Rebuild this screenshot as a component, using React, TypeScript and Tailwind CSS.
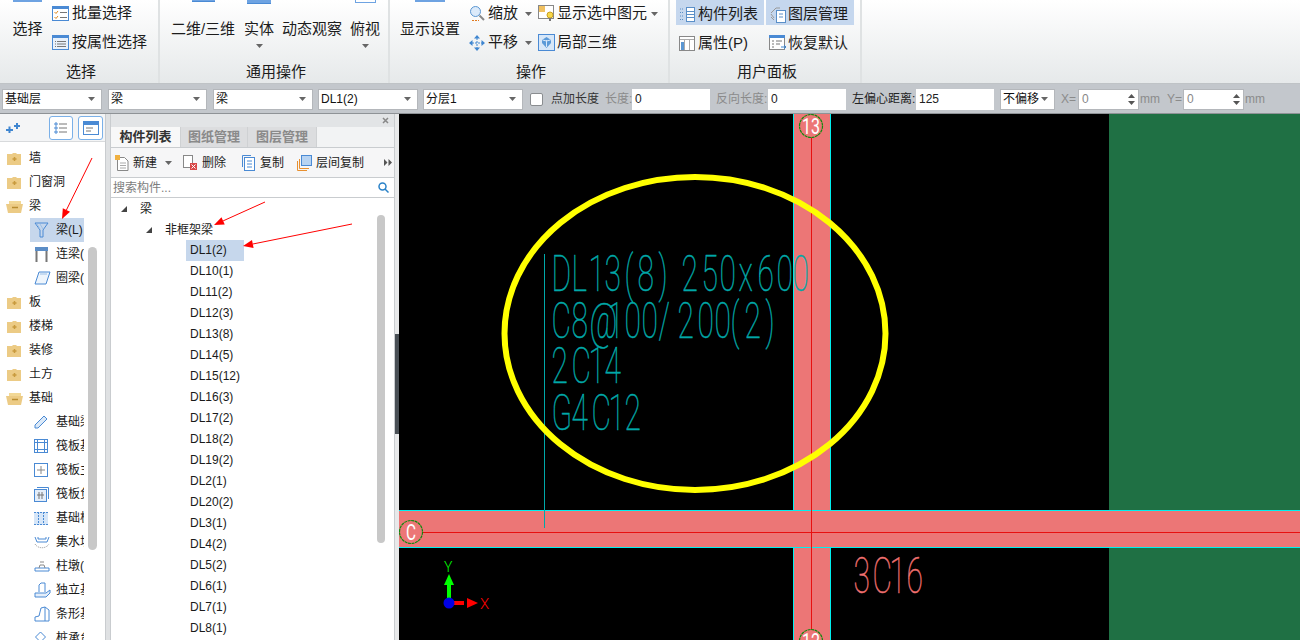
import React from "react";

const B = "#4a8ad4";
const Caret = ({ cls = "" }: { cls?: string }) => (
  <svg width="7" height="4" viewBox="0 0 7 4" className={cls}><path d="M0 0h7L3.5 4z" fill="#666" /></svg>
);

/* ---------- ribbon icons ---------- */
const IcoBatch = () => (
  <svg width="17" height="15" viewBox="0 0 17 15"><rect x=".5" y=".5" width="16" height="14" fill="#fff" stroke={B} /><rect x="0" y="0" width="17" height="3" fill={B} /><path d="M2.5 6l1.5 1.5L6 5M2.5 11l1.5 1.5L6 10" stroke="#e08a20" fill="none" /><path d="M8 6.5h7M8 11.5h7" stroke="#777" /></svg>
);
const IcoAttr = () => (
  <svg width="17" height="15" viewBox="0 0 17 15"><rect x=".5" y=".5" width="16" height="14" fill="#e8f1fb" stroke={B} /><rect x="0" y="0" width="17" height="3" fill={B} /><path d="M5 6.5h9M5 9h9M5 11.5h9M3 6.5h1M3 9h1M3 11.5h1" stroke="#777" /></svg>
);
const IcoZoom = () => (
  <svg width="16" height="17" viewBox="0 0 16 17"><circle cx="6.5" cy="6.5" r="5" fill="#dbeafa" stroke="#5a96d2" /><path d="M10.5 10.5l4.5 4.5" stroke="#888" strokeWidth="2" /><path d="M3 15.5h7" stroke="#e07a20" strokeDasharray="2 1" /></svg>
);
const IcoPan = () => (
  <svg width="16" height="16" viewBox="0 0 16 16"><path d="M8 0l3 3.5H5zM8 16l-3-3.5h6zM0 8l3.5-3v6zM16 8l-3.5 3V5z" fill="#3f86d0" /><path d="M8 3v10M3 8h10" stroke="#3f86d0" strokeDasharray="2 1" /></svg>
);
const IcoShow = () => (
  <svg width="17" height="17" viewBox="0 0 17 17"><rect x=".5" y=".5" width="15" height="13" fill="#fff" stroke="#888" /><rect x="1" y="1" width="6" height="6" fill="#f0c060" /><circle cx="12" cy="10" r="3" fill="#f7d84a" stroke="#c9a020" /><rect x="11" y="13" width="2" height="3" fill="#777" /></svg>
);
const IcoLocal = () => (
  <svg width="17" height="17" viewBox="0 0 17 17"><rect x=".5" y=".5" width="16" height="16" fill="#d7e7f8" stroke={B} /><path d="M8.5 3l4.5 3v3l-4.5 5L4 9V6z" fill="#5b9ad8" /><path d="M8.5 6v7M4.5 6l4 1 4-1" stroke="#d7e7f8" fill="none" /></svg>
);
const IcoList = () => (
  <svg width="15" height="17" viewBox="0 0 15 17"><rect x="6.5" y="1.5" width="8" height="14" fill="#fff" stroke="#5a8fc8" /><path d="M6.5 5.5h8M6.5 8.500h8M6.500 11.500h8" stroke="#5a8fc8" /><path d="M0 3h4M0 6.500h4M0 10h4M0 13.500h4" stroke="#5a8fc8" strokeDasharray="1 1" /></svg>
);
const IcoLayer = () => (
  <svg width="17" height="17" viewBox="0 0 17 17"><path d="M1 7l5-5h4" stroke="#999" fill="none" /><path d="M1 8l3 4M1 11l3 3" stroke="#999" /><rect x="6.500" y="4.500" width="9" height="12" fill="#fff" stroke="#5a8fc8" /><path d="M9 8h4M9 11h4" stroke="#5a8fc8" /></svg>
);
const IcoProp = () => (
  <svg width="16" height="15" viewBox="0 0 16 15"><rect x=".5" y=".5" width="15" height="14" fill="#fff" stroke="#888" /><path d="M1 3.500h14M5.500 4v10M10.500 4v10" stroke="#aaa" /><rect x="2" y="6" width="3" height="8" fill="#5a96d2" /></svg>
);
const IcoReset = () => (
  <svg width="18" height="16" viewBox="0 0 18 16"><rect x=".5" y=".5" width="15" height="14" fill="#fff" stroke="#888" /><rect x="0" y="0" width="16" height="3" fill={B} /><path d="M3 6h2M7 6h6M3 9h2M7 9h4M3 12h2" stroke="#777" /><path d="M12 12h5M15 10l2 2-2 2" stroke="#3f86d0" fill="none" /></svg>
);

const Big = ({ label, w, caret, sliver }: { label: string; w: string; caret?: boolean; sliver?: React.ReactNode }) => (
  <div className={`flex flex-col items-center h-[60px] ${w}`}>
    <div className="h-[5px] flex justify-center items-start">{sliver}</div>
    <div className="h-[20px] mt-[14px] leading-[20px] whitespace-nowrap">{label}</div>
    {caret && <Caret cls="mt-[5px]" />}
  </div>
);
const Small = ({ icon, label, caret, iconW = "w-[19px]", cls = "", caretCls = "ml-[7px]" }: { icon: React.ReactNode; label: string; caret?: boolean; iconW?: string; cls?: string; caretCls?: string }) => (
  <div className={`flex items-center whitespace-nowrap ${cls}`}>
    <span className={`${iconW} flex shrink-0`}>{icon}</span>
    <span>{label}</span>
    {caret && <Caret cls={caretCls} />}
  </div>
);
const Group = ({ w, label, children }: { w: string; label: string; children: React.ReactNode }) => (
  <div className={`${w} h-full flex flex-col border-r-2 border-[#dfe2e3] shrink-0`}>
    <div className="h-[61px] flex">{children}</div>
    <div className="h-[22px] pl-[4px] text-center leading-[22px]">{label}</div>
  </div>
);
const Blue = ({ w, h }: { w: string; h: string }) => <div className={`${w} ${h} bg-[#6ea3e2] border-b border-[#4a8ad4]`} />;

const Ribbon = () => (
  <div className="h-[84px] flex bg-gradient-to-b from-white to-[#e6e9ea] text-[15px] text-[#1c1c1c] shrink-0 border-b border-[#bfc3c6]">
    <Group w="w-[160px]" label="选择">
      <div className="w-[52px] pl-[12px]"><Big label="选择" w="w-[31px]" sliver={<div className="w-[29px] h-[2px] bg-[#6ea3e2]" />} /></div>
      <div className="flex flex-col">
        <Small cls="h-[26px]" icon={<IcoBatch />} label="批量选择" iconW="w-[20px]" />
        <Small cls="h-[32px]" icon={<IcoAttr />} label="按属性选择" iconW="w-[20px]" />
      </div>
    </Group>
    <Group w="w-[230px]" label="通用操作">
      <div className="flex pl-[10px] gap-[8px]">
        <Big label="二维/三维" w="w-[66px]" sliver={<Blue w="w-[23px]" h="h-[2px]" />} />
        <Big label="实体" w="w-[30px]" caret sliver={<Blue w="w-[24px]" h="h-[4px]" />} />
        <Big label="动态观察" w="w-[60px]" />
        <Big label="俯视" w="w-[30px]" caret sliver={<div className="w-[21px] h-[3px] border-b border-x border-[#6ea3e2]" />} />
      </div>
    </Group>
    <Group w="w-[280px]" label="操作">
      <div className="w-[79px] pl-[10px]"><Big label="显示设置" w="w-[60px]" sliver={<div className="w-[30px] h-[2px] bg-[#6ea3e2]" />} /></div>
      <div className="flex flex-col w-[69px]">
        <Small cls="h-[27px]" icon={<IcoZoom />} label="缩放" caret />
        <Small cls="h-[31px]" icon={<IcoPan />} label="平移" caret />
      </div>
      <div className="flex flex-col">
        <Small cls="h-[27px]" icon={<IcoShow />} label="显示选中图元" caret caretCls="ml-[4px]" />
        <Small cls="h-[31px]" icon={<IcoLocal />} label="局部三维" />
      </div>
    </Group>
    <Group w="w-[192px]" label="用户面板">
      <div className="flex flex-col pl-[6px]">
        <div className="flex gap-[2px] h-[25px]">
          <Small cls="w-[88px] bg-[#c5d7ee] pl-[4px] pt-[3px]" iconW="w-[18px]" icon={<IcoList />} label="构件列表" />
          <Small cls="w-[88px] bg-[#c5d7ee] pl-[4px] pt-[3px]" iconW="w-[18px]" icon={<IcoLayer />} label="图层管理" />
        </div>
        <div className="flex gap-[2px] h-[36px]">
          <Small cls="w-[88px] pl-[3px]" iconW="w-[19px]" icon={<IcoProp />} label="属性(P)" />
          <Small cls="w-[88px] pl-[3px]" iconW="w-[19px]" icon={<IcoReset />} label="恢复默认" />
        </div>
      </div>
    </Group>
  </div>
);

/* ---------- property bar ---------- */
const Combo = ({ w, label, cls = "" }: { w: string; label: string; cls?: string }) => (
  <div className={`${w} h-[21px] bg-white border border-[#b4b7bb] flex items-center justify-between pl-[2px] pr-[6px] text-[12px] text-[#111] shrink-0 ${cls}`}>
    <span>{label}</span><Caret />
  </div>
);
const Field = ({ w, v, cls = "" }: { w: string; v: string; cls?: string }) => (
  <div className={`${w} h-[21px] bg-white pl-[3px] leading-[21px] text-[12px] text-[#222] shrink-0 ${cls}`}>{v}</div>
);
const Spin = ({ w }: { w: string }) => (
  <div className={`${w} h-[21px] bg-white border border-[#b4b7bb] flex items-center justify-between pl-[3px] pr-[3px] text-[12px] text-[#888] shrink-0`}>
    <span>0</span>
    <svg width="7" height="13" viewBox="0 0 7 13"><path d="M0 5l3.500-4L7 5zM0 8l3.500 4L7 8z" fill="#555" /></svg>
  </div>
);
const PropBar = () => (
  <div className="h-[29px] bg-[#c3c7cc] flex items-center pl-[2px] pt-[1px] text-[12px] shrink-0">
    <Combo w="w-[100px]" label="基础层" />
    <Combo w="w-[99px]" label="梁" cls="ml-[6px]" />
    <Combo w="w-[100px]" label="梁" cls="ml-[6px]" />
    <Combo w="w-[100px]" label="DL1(2)" cls="ml-[5px]" />
    <Combo w="w-[100px]" label="分层1" cls="ml-[5px]" />
    <div className="w-[13px] h-[13px] ml-[7px] bg-white border border-[#8a8d90] rounded-[2px] shrink-0" />
    <span className="ml-[8px] w-[54px] text-[#333] whitespace-nowrap">点加长度</span>
    <span className="w-[27px] text-[#8b8b8b] whitespace-nowrap">长度:</span>
    <Field w="w-[78px]" v="0" />
    <span className="ml-[6px] w-[52px] text-[#8b8b8b] whitespace-nowrap">反向长度:</span>
    <Field w="w-[78px]" v="0" />
    <span className="ml-[6px] w-[64px] text-[#222] whitespace-nowrap">左偏心距离:</span>
    <Field w="w-[78px]" v="125" />
    <Combo w="w-[55px]" label="不偏移" cls="ml-[6px]" />
    <span className="ml-[6px] w-[17px] text-[#8b8b8b]">X=</span>
    <Spin w="w-[61px]" />
    <span className="ml-[1px] w-[27px] text-[#8b8b8b]">mm</span>
    <span className="w-[16px] text-[#8b8b8b]">Y=</span>
    <Spin w="w-[61px]" />
    <span className="ml-[1px] text-[#8b8b8b]">mm</span>
  </div>
);

/* ---------- left tree ---------- */
const FolderC = () => (
  <svg width="16" height="13" viewBox="0 0 16 13"><path d="M1 2h5l1-1h3l1 1h4v11H1z" fill="#eccb85" /><path d="M6.500 7h4M8.500 5v4" stroke="#c89a3e" strokeWidth="1.500" /></svg>
);
const FolderO = () => (
  <svg width="18" height="13" viewBox="0 0 18 13"><path d="M3 1h12v3H3z" fill="#f2d896" /><path d="M0 4h17l-2 9H2z" fill="#eccb85" /><path d="M6 7.500h6" stroke="#b98c30" strokeWidth="1.500" /></svg>
);
const i = { fill: "none", stroke: B } as const;
const TIcons: Record<string, React.ReactNode> = {
  liang: <svg width="15" height="16" viewBox="0 0 15 16"><path d="M1 1h13L9 8v7H6V8z" {...i} /><path d="M3 2l3 5M6 2l3 5" stroke="#9cc0e6" /></svg>,
  lian: <svg width="15" height="17" viewBox="0 0 15 17"><rect x="1" y="1" width="13" height="4" fill="#5b8dc6" /><path d="M2.500 5v11M12.500 5v11" stroke="#777" strokeWidth="2" /></svg>,
  quan: <svg width="17" height="14" viewBox="0 0 17 14"><path d="M5 1h11l-4 12H1z" fill="#eef5fc" stroke={B} /><path d="M6 3h7" stroke="#9cc0e6" /></svg>,
  ji: <svg width="14" height="14" viewBox="0 0 14 14"><path d="M1 10L10 1l3 3-9 9H1z" fill="#dbe9f8" stroke={B} /></svg>,
  fa1: <svg width="14" height="14" viewBox="0 0 14 14"><rect x=".5" y=".5" width="13" height="13" {...i} /><rect x="3.500" y="3.500" width="7" height="7" {...i} /><path d="M0 3.500h14M0 10.500h14M3.500 0v14M10.500 0v14" {...i} /></svg>,
  fa2: <svg width="14" height="14" viewBox="0 0 14 14"><rect x=".5" y=".5" width="13" height="13" {...i} /><path d="M7 3v8M3 7h8" stroke="#888" /></svg>,
  fa3: <svg width="15" height="15" viewBox="0 0 15 15"><path d="M3 0.500h11.500V12" {...i} /><rect x=".5" y="2.500" width="12" height="12" fill="#e4eefa" stroke={B} /><path d="M5 5v7M8 5v7M3 8h7" stroke="#777" /></svg>,
  ji2: <svg width="14" height="13" viewBox="0 0 14 13"><rect x="0" y="0" width="14" height="13" fill="#d6e6f8" /><path d="M0 .5h14M0 12.500h14M4.500 0v13M9.500 0v13" stroke={B} strokeDasharray="2 1" /></svg>,
  shui: <svg width="16" height="13" viewBox="0 0 16 13"><path d="M1 1l2 5h10l2-5M4 1v2h8V1" {...i} /><path d="M1 8c3 5 11 5 14 0" stroke="#999" strokeDasharray="1 1" fill="none" /></svg>,
  zhu: <svg width="16" height="11" viewBox="0 0 16 11"><path d="M1 7h14v3H1z" {...i} /><path d="M5 7l1-3h4l1 3M6 1h4" stroke="#888" fill="none" /></svg>,
  du: <svg width="17" height="16" viewBox="0 0 17 16"><path d="M1 11h11l4-3v3l-4 4H1z" fill="#e4eefa" stroke={B} /><path d="M5 10V3l2-2h4v9" fill="#fff" stroke={B} /></svg>,
  tiao: <svg width="16" height="16" viewBox="0 0 16 16"><path d="M1 15v-4l4-1 2-8 4-1 4 3v11z" fill="#fff" stroke={B} /><path d="M11 1v14" stroke={B} /></svg>,
  zhuang: <svg width="13" height="14" viewBox="0 0 13 14"><path d="M6.500 1l5 5-5 5-5-5z" {...i} /><path d="M4 11v3M9 11v3" stroke={B} /></svg>,
};
const leftRows: { t: string; k?: "c" | "o"; icon?: string; sel?: boolean }[] = [
  { t: "墙", k: "c" }, { t: "门窗洞", k: "c" }, { t: "梁", k: "o" },
  { t: "梁(L)", icon: "liang", sel: true }, { t: "连梁(G)", icon: "lian" }, { t: "圈梁(E)", icon: "quan" },
  { t: "板", k: "c" }, { t: "楼梯", k: "c" }, { t: "装修", k: "c" }, { t: "土方", k: "c" }, { t: "基础", k: "o" },
  { t: "基础梁(F)", icon: "ji" }, { t: "筏板基础(M)", icon: "fa1" }, { t: "筏板主筋(R)", icon: "fa2" }, { t: "筏板负筋(X)", icon: "fa3" },
  { t: "基础板带(W)", icon: "ji2" }, { t: "集水坑(K)", icon: "shui" }, { t: "柱墩(Y)", icon: "zhu" }, { t: "独立基础(D)", icon: "du" },
  { t: "条形基础(T)", icon: "tiao" }, { t: "桩承台(V)", icon: "zhuang" },
];
const LeftPanel = () => (
  <div className="w-[106px] h-full bg-white border-r border-[#c9cccf] flex flex-col shrink-0 relative overflow-hidden text-[12px] text-[#1a1a1a]">
    <div className="h-[28px] border-b border-[#d8dadc] bg-[#f4f5f6] flex items-center pl-[6px] shrink-0">
      <svg width="14" height="10" viewBox="0 0 14 10"><path d="M0 7h7M3.500 3.500v7M8 3h6M11 0v6" stroke="#3f86d0" strokeWidth="2" /></svg>
      <div className="ml-[29px] w-[24px] h-[24px] border border-[#7ab0e8] rounded-[3px] bg-white flex items-center justify-center">
        <svg width="14" height="14" viewBox="0 0 14 14"><path d="M1 2h2v2H1zM1 6h2v2H1zM1 10h2v2H1z" {...i} /><path d="M5 3h8M5 7h8M5 11h8" stroke="#777" /></svg>
      </div>
      <div className="ml-[5px] w-[25px] h-[24px] border border-[#7ab0e8] rounded-[3px] bg-white flex items-center justify-center">
        <svg width="16" height="14" viewBox="0 0 16 14"><rect x=".5" y=".5" width="15" height="13" fill="#fff" stroke={B} /><rect x="0" y="0" width="16" height="4" fill={B} /><path d="M3 7h7M3 10h5" stroke="#777" /></svg>
      </div>
    </div>
    <div className="flex flex-col pt-[4px]">
      {leftRows.map((r, n) => (
        <div key={n} className="h-[24px] flex items-center shrink-0">
          {r.k ? (
            <>
              <span className="w-[29px] pl-[6px] flex shrink-0">{r.k === "c" ? <FolderC /> : <FolderO />}</span>
              <span className="whitespace-nowrap">{r.t}</span>
            </>
          ) : (
            <div className={`ml-[30px] w-[54px] h-[24px] flex items-center overflow-hidden ${r.sel ? "bg-[#c6d7ec]" : ""}`}>
              <span className="w-[26px] pl-[4px] flex shrink-0">{TIcons[r.icon!]}</span>
              <span className="whitespace-nowrap">{r.t}</span>
            </div>
          )}
        </div>
      ))}
    </div>
    <div className="absolute left-[88px] top-[133px] w-[9px] h-[303px] rounded-full bg-[#c8c8c8]" />
  </div>
);

/* ---------- component panel ---------- */
const dl = ["DL1(2)", "DL10(1)", "DL11(2)", "DL12(3)", "DL13(8)", "DL14(5)", "DL15(12)", "DL16(3)", "DL17(2)", "DL18(2)", "DL19(2)", "DL2(1)", "DL20(2)", "DL3(1)", "DL4(2)", "DL5(2)", "DL6(1)", "DL7(1)", "DL8(1)"];
const Tri = () => <svg width="6" height="6" viewBox="0 0 6 6"><path d="M6 0v6H0z" fill="#444" /></svg>;
const Tool = ({ icon, label, w, caret }: { icon: React.ReactNode; label: string; w: string; caret?: boolean }) => (
  <div className={`${w} flex items-center whitespace-nowrap shrink-0`}>{icon}<span className="ml-[4px]">{label}</span>{caret && <Caret cls="ml-[8px]" />}</div>
);
const MidPanel = () => (
  <div className="w-[285px] h-full bg-white border-x border-[#c9cccf] flex flex-col ml-[4px] shrink-0 relative overflow-hidden">
    <div className="h-[13px] bg-[#e2e4e6] flex justify-end items-center pr-[5px] shrink-0">
      <svg width="7" height="7" viewBox="0 0 7 7"><path d="M1 1l5 5M6 1L1 6" stroke="#888" strokeWidth="1.500" /></svg>
    </div>
    <div className="h-[21px] bg-[#f2f3f4] flex text-[13px] font-bold border-b border-[#c9cccf] shrink-0">
      <div className="w-[69px] bg-[#f8f8f8] text-[#333] text-center leading-[20px]">构件列表</div>
      <div className="w-[68px] bg-[#dcdddf] text-[#8a8a8a] text-center leading-[20px] border-x border-[#cfd1d3]">图纸管理</div>
      <div className="w-[69px] bg-[#dcdddf] text-[#8a8a8a] text-center leading-[20px] border-r border-[#cfd1d3]">图层管理</div>
    </div>
    <div className="h-[30px] bg-[#f6f6f7] border-b border-[#c9cccf] flex items-center pl-[4px] text-[12px] text-[#222] shrink-0">
      <Tool w="w-[68px]" label="新建" caret icon={<svg width="14" height="16" viewBox="0 0 14 16"><path d="M2.500 2.500h7l3.500 3.500v9.500H2.500z" fill="#fff" stroke="#888" /><path d="M5 8h6M5 10.500h6M5 13h6" stroke="#aaa" /><rect x="0" y="0" width="5" height="5" fill="#f0b040" /></svg>} />
      <Tool w="w-[59px]" label="删除" icon={<svg width="15" height="15" viewBox="0 0 15 15"><rect x=".5" y=".5" width="9" height="12" fill="#fff" stroke="#888" /><rect x="7" y="8" width="7" height="7" fill="#d84848" /><path d="M8.500 9.500l4 4M12.500 9.500l-4 4" stroke="#fff" /></svg>} />
      <Tool w="w-[55px]" label="复制" icon={<svg width="14" height="16" viewBox="0 0 14 16"><rect x="2.500" y="2.500" width="10" height="13" fill="#fff" stroke={B} /><path d="M.5 12V.5H9" stroke={B} fill="none" /><path d="M5 6h5M5 9h5M5 12h5" stroke={B} /></svg>} />
      <Tool w="w-[87px]" label="层间复制" icon={<svg width="15" height="16" viewBox="0 0 15 16"><path d="M.5 6v9.500H10" stroke="#e89030" fill="none" /><path d="M2.500 4v9.500H12" stroke="#e89030" fill="none" /><rect x="4.500" y=".5" width="10" height="10" fill="#b7d3f2" stroke={B} /></svg>} />
      <svg width="8" height="7" viewBox="0 0 8 7"><path d="M0 0l3.500 3.500L0 7zM4.500 0L8 3.500 4.500 7z" fill="#555" /></svg>
    </div>
    <div className="h-[20px] border-b border-[#c9cccf] flex items-center justify-between pl-[2px] pr-[5px] text-[12px] text-[#7d7d7d] shrink-0">
      <span>搜索构件...</span>
      <svg width="11" height="11" viewBox="0 0 11 11"><circle cx="4.500" cy="4.500" r="3.500" fill="none" stroke="#2a82c8" strokeWidth="1.500" /><path d="M7 7l3.500 3.500" stroke="#2a82c8" strokeWidth="1.500" /></svg>
    </div>
    <div className="text-[12px] text-[#1a1a1a]">
      <div className="h-[21px] flex items-center pl-[10px]"><Tri /><span className="ml-[13px]">梁</span></div>
      <div className="h-[21px] flex items-center pl-[35px]"><Tri /><span className="ml-[13px]">非框架梁</span></div>
      {dl.map((d, n) => (
        <div key={d} className={`h-[21px] leading-[21px] ml-[75px] pl-[4px] w-[58px] ${n === 0 ? "bg-[#c6d7ec]" : ""}`}>{d}</div>
      ))}
    </div>
    <div className="absolute left-[266px] top-[101px] w-[8px] h-[328px] rounded-full bg-[#c8c8c8]" />
  </div>
);

/* ---------- CAD canvas ---------- */
const SX = 0.6;
const Cad = ({ y, xs, fill = "#00a8a8", t }: { y: number; xs: number[]; fill?: string; t: string }) => (
  <text
    transform={`translate(0 ${y}) scale(${SX} 1)`}
    x={xs.map((p) => ((p - 1.5) / SX).toFixed(1)).join(" ")}
    y="0"
    fontSize="50"
    fill={fill}
    stroke={fill}
    strokeWidth="0.5"
    fontWeight={100}
    fontFamily="Roboto, 'Liberation Sans', sans-serif"
  >
    {t}
  </text>
);
const AxisMark = ({ cx, cy, t, size = 22, w }: { cx: number; cy: number; t: string; size?: number; w: number }) => (
  <g>
    <circle cx={cx} cy={cy} r="11.500" fill="#ec7676" stroke="#0f8a0f" strokeWidth="1.200" strokeDasharray="3 0.600" />
    <text x={cx - w / 2} y={cy + 8} textLength={w} lengthAdjust="spacingAndGlyphs" fontSize={size} fill="#fff" fontFamily="Roboto, sans-serif" fontWeight={400}>{t}</text>
  </g>
);
const Canvas = () => (
  <div className="flex-1 h-full bg-black relative overflow-hidden">
    <svg width="901" height="527" viewBox="399 113 901 527" className="absolute inset-0">
      <rect x="1109" y="113" width="191" height="527" fill="#1f7044" />
      <rect x="793" y="113" width="38" height="527" fill="#ec7676" />
      <rect x="399" y="509" width="901" height="38" fill="#ec7676" />
      <g shapeRendering="crispEdges">
        <path d="M793.500 113V509M830.500 113V509M793.500 547V640M830.500 547V640M399 509.500H1300M399 546.500H1300" stroke="#00f0f0" fill="none" />
        <path d="M811.500 113V640M399 531.500H1300" stroke="#e81010" fill="none" />
        <path d="M544.500 253V527" stroke="#00a8a8" fill="none" />
      </g>
      <Cad y={290} xs={[553, 573, 590, 606, 626, 639, 660, 670, 683, 703, 721, 740, 759, 778, 794]} t="DL13(8) 250x600" />
      <Cad y={337} xs={[553, 573, 591, 609, 626, 643, 660, 679, 699, 716, 732, 746, 767]} t="C8@100/200(2)" />
      <Cad y={382} xs={[553, 573, 590, 606]} t="2C14" />
      <Cad y={429} xs={[553, 573, 593, 610, 626]} t="G4C12" />
      <Cad y={592} xs={[855, 874, 891, 908]} fill="#f07070" t="3C16" />
      <ellipse cx="695" cy="332.500" rx="190.500" ry="156.500" fill="none" stroke="#ffff00" strokeWidth="6" />
      <AxisMark cx={811} cy={125} t="13" w={18} />
      <AxisMark cx={411} cy={531} t="C" w={10} />
      <AxisMark cx={811} cy={640} t="12" w={18} />
      {/* axis gizmo */}
      <path d="M449 602V584" stroke="#00ff00" strokeWidth="4" />
      <path d="M449 573l5 11h-10z" fill="#00ff00" />
      <path d="M449 602H464" stroke="#ff0000" strokeWidth="4" />
      <path d="M478 602l-11-5v10z" fill="#ff0000" />
      <circle cx="449" cy="602" r="5.500" fill="#0000e6" />
      <text x="444" y="571" fontSize="14" fill="#00ff00" fontFamily="Roboto, sans-serif" fontWeight={300}>Y</text>
      <text x="480" y="608" fontSize="15" fill="#ff0000" fontFamily="Roboto, sans-serif" fontWeight={300}>X</text>
    </svg>
  </div>
);

const Arrow = ({ a, b, c, d }: { a: number; b: number; c: number; d: number }) => {
  const ang = Math.atan2(d - b, c - a);
  const L = 10, W = 4;
  const bx = c - L * Math.cos(ang), by = d - L * Math.sin(ang);
  const nx = -Math.sin(ang) * W, ny = Math.cos(ang) * W;
  return (
    <g>
      <line x1={a} y1={b} x2={bx} y2={by} stroke="#f00" strokeWidth="1" />
      <path d={`M${c} ${d}L${bx + nx} ${by + ny}L${bx - nx} ${by - ny}z`} fill="#f00" />
    </g>
  );
};

export default function App() {
  return (
    <div className="w-[1300px] h-[640px] relative overflow-hidden flex flex-col bg-[#dfe1e3] [font-family:'Liberation_Sans','Noto_Sans_CJK_SC',sans-serif]">
      <Ribbon />
      <PropBar />
      <div className="flex-1 min-h-0 flex border-t border-[#8e9296]">
        <LeftPanel />
        <MidPanel />
        <div className="w-[4px] h-full bg-[#e8e9ea] shrink-0 relative">
          <div className="absolute left-0 top-[220px] w-[4px] h-[100px] bg-[#4a5056]" />
        </div>
        <Canvas />
      </div>
      <svg width="1300" height="640" className="absolute inset-0 pointer-events-none">
        <Arrow a={92} b={158} c={62} d={219} />
        <Arrow a={265} b={202} c={214} d={225} />
        <Arrow a={352} b={224} c={243} d={246} />
      </svg>
    </div>
  );
}
